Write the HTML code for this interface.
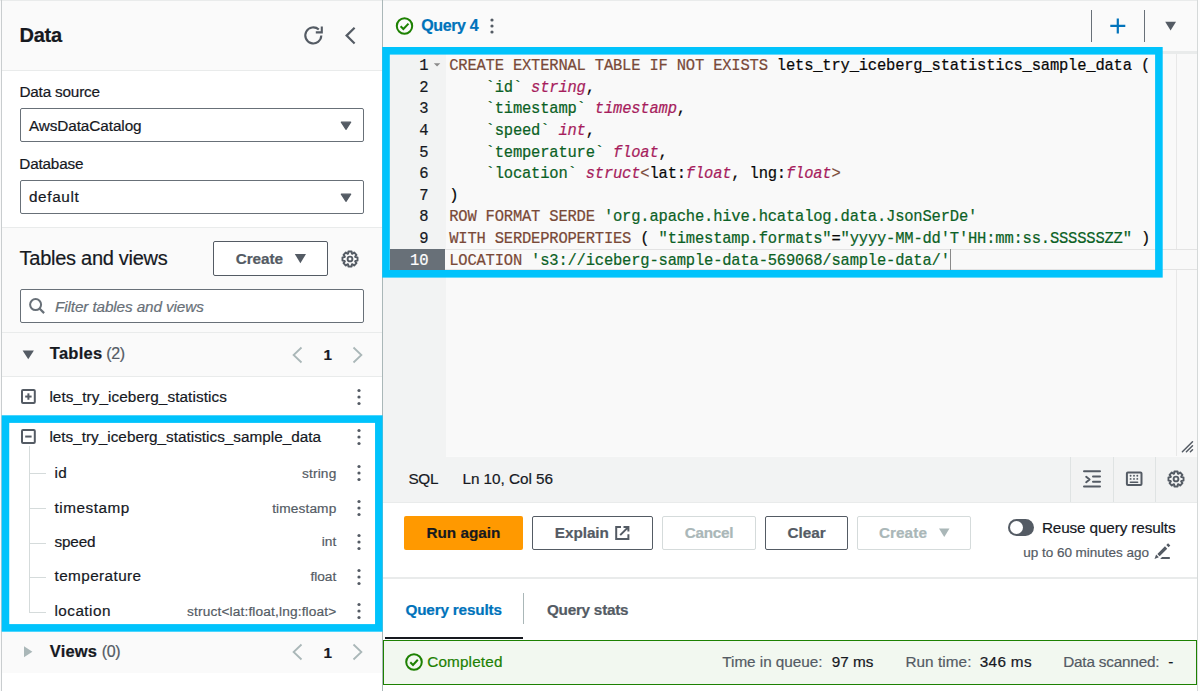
<!DOCTYPE html><html><head><meta charset="utf-8"><style>div{-webkit-text-stroke:0.2px}html,body{margin:0;padding:0;width:1200px;height:691px;overflow:hidden;position:relative;background:#fff}body{font-family:'Liberation Sans', sans-serif}</style></head><body>
<div style="position:absolute;left:0px;top:0px;width:1200px;height:691px;background:#fafafa"></div>
<div style="position:absolute;left:0px;top:0px;width:1200px;height:1px;background:#e9ebeb"></div>
<div style="position:absolute;left:1px;top:0px;width:1px;height:691px;background:#c9cdcf"></div>
<div style="position:absolute;left:2px;top:1px;width:380px;height:69px;background:#fafafa"></div>
<div style="position:absolute;left:2px;top:70px;width:380px;height:1px;background:#e9ebeb"></div>
<div style="position:absolute;left:2px;top:71px;width:380px;height:156px;background:#ffffff"></div>
<div style="position:absolute;left:2px;top:227px;width:380px;height:1px;background:#e9ebeb"></div>
<div style="position:absolute;left:2px;top:228px;width:380px;height:104px;background:#fafafa"></div>
<div style="position:absolute;left:2px;top:332px;width:380px;height:1px;background:#e9ebeb"></div>
<div style="position:absolute;left:2px;top:333px;width:380px;height:43px;background:#fafafa"></div>
<div style="position:absolute;left:2px;top:376px;width:380px;height:1px;background:#e9ebeb"></div>
<div style="position:absolute;left:2px;top:377px;width:380px;height:255px;background:#ffffff"></div>
<div style="position:absolute;left:2px;top:632px;width:380px;height:41px;background:#fafafa"></div>
<div style="position:absolute;left:2px;top:673px;width:380px;height:18px;background:#ffffff"></div>
<div style="position:absolute;left:382px;top:0px;width:1px;height:691px;background:#aab7b8"></div>
<svg style="position:absolute;left:300px;top:22px" width="28" height="28" viewBox="300 22 28 28">
<path d="M321.3 35.6 A8 8 0 1 1 318.8 29.6" fill="none" stroke="#545b64" stroke-width="2.1"/>
<path d="M315.8 32.4 H321.8 V26.6" fill="none" stroke="#545b64" stroke-width="2.1"/></svg>
<svg style="position:absolute;left:340px;top:22px" width="24" height="28" viewBox="340 22 24 28">
<path d="M354.6 27.8 L346.6 35.6 L354.6 43.5" fill="none" stroke="#545b64" stroke-width="2.2"/></svg>
<div style="position:absolute;left:19.5px;top:108px;width:344px;height:34px;box-sizing:border-box;border:1px solid #687078;border-radius:2px;background:#fff"></div>
<div style="position:absolute;left:19.5px;top:179.5px;width:344px;height:34px;box-sizing:border-box;border:1px solid #687078;border-radius:2px;background:#fff"></div>
<svg style="position:absolute;left:336px;top:120.4px" width="20" height="12" viewBox="0 0 20 12"><path d="M5.3 2.2 H14.7 L10 9.3 Z" fill="#545b64" stroke="#545b64" stroke-width="1.2" stroke-linejoin="round"/></svg>
<svg style="position:absolute;left:336px;top:191.8px" width="20" height="12" viewBox="0 0 20 12"><path d="M5.3 2.2 H14.7 L10 9.3 Z" fill="#545b64" stroke="#545b64" stroke-width="1.2" stroke-linejoin="round"/></svg>
<div style="position:absolute;left:213px;top:241px;width:114.5px;height:34.5px;box-sizing:border-box;border:1.5px solid #545b64;border-radius:2px;background:#fff"></div>
<svg style="position:absolute;left:290px;top:250px" width="20" height="16" viewBox="290 250 20 16"><path d="M294.8 254 H306 L300.4 263.3 Z" fill="#545b64"/></svg>
<svg style="position:absolute;left:338.3px;top:246.60000000000002px" width="24" height="24" viewBox="338.3 246.60000000000002 24 24"><path d="M348.44 253.21 L348.70 251.07 L351.90 251.07 L352.16 253.21 L352.80 253.48 L354.49 252.14 L356.76 254.41 L355.42 256.10 L355.69 256.74 L357.83 257.00 L357.83 260.20 L355.69 260.46 L355.42 261.10 L356.76 262.79 L354.49 265.06 L352.80 263.72 L352.16 263.99 L351.90 266.13 L348.70 266.13 L348.44 263.99 L347.80 263.72 L346.11 265.06 L343.84 262.79 L345.18 261.10 L344.91 260.46 L342.77 260.20 L342.77 257.00 L344.91 256.74 L345.18 256.10 L343.84 254.41 L346.11 252.14 L347.80 253.48 Z" fill="none" stroke="#545b64" stroke-width="1.9" stroke-linejoin="round"/><circle cx="350.3" cy="258.6" r="2.4" fill="none" stroke="#545b64" stroke-width="1.9"/></svg>
<div style="position:absolute;left:19.5px;top:289px;width:344.5px;height:34px;box-sizing:border-box;border:1px solid #687078;border-radius:2px;background:#fff"></div>
<svg style="position:absolute;left:26px;top:296px" width="22" height="22" viewBox="26 296 22 22"><circle cx="35.6" cy="304.6" r="5.5" fill="none" stroke="#687078" stroke-width="2"/><path d="M39.5 308.5 L44.1 313.1" stroke="#687078" stroke-width="2.2"/></svg>
<svg style="position:absolute;left:18px;top:345px" width="20" height="20" viewBox="18 345 20 20"><path d="M22.6 350.6 H33.9 L28.25 359.3 Z" fill="#545b64"/></svg>
<svg style="position:absolute;left:288px;top:342.6px" width="80" height="24" viewBox="288 342.6 80 24"><path d="M301.5 347.1 L293.6 354.6 L301.5 362.1" fill="none" stroke="#aab7b8" stroke-width="1.8"/><path d="M353.5 347.1 L361.4 354.6 L353.5 362.1" fill="none" stroke="#aab7b8" stroke-width="1.8"/></svg>
<svg style="position:absolute;left:18.6px;top:387.2px" width="20" height="20" viewBox="18.6 387.2 20 20"><rect x="21.6" y="390.2" width="12.8" height="13.1" rx="1" fill="none" stroke="#545b64" stroke-width="2"/><path d="M24.8 396.75 H31.200000000000003" stroke="#545b64" stroke-width="2"/><path d="M28.0 393.55 V399.95" stroke="#545b64" stroke-width="2"/></svg>
<svg style="position:absolute;left:353.9px;top:386.5px" width="10" height="20" viewBox="353.9 386.5 10 20"><circle cx="358.9" cy="390.0" r="1.6" fill="#545b64"/><circle cx="358.9" cy="396.5" r="1.6" fill="#545b64"/><circle cx="358.9" cy="403.0" r="1.6" fill="#545b64"/></svg>
<svg style="position:absolute;left:18.6px;top:427.2px" width="20" height="20" viewBox="18.6 427.2 20 20"><rect x="21.6" y="430.2" width="12.8" height="13.1" rx="1" fill="none" stroke="#545b64" stroke-width="2"/><path d="M24.8 436.75 H31.200000000000003" stroke="#545b64" stroke-width="2"/></svg>
<svg style="position:absolute;left:353.9px;top:427px" width="10" height="20" viewBox="353.9 427 10 20"><circle cx="358.9" cy="430.5" r="1.6" fill="#545b64"/><circle cx="358.9" cy="437" r="1.6" fill="#545b64"/><circle cx="358.9" cy="443.5" r="1.6" fill="#545b64"/></svg>
<div style="position:absolute;left:28.6px;top:446px;width:1px;height:166.5px;background:#d5dbdb"></div>
<div style="position:absolute;left:29px;top:473.0px;width:17px;height:1px;background:#d5dbdb"></div>
<svg style="position:absolute;left:353.9px;top:462.5px" width="10" height="20" viewBox="353.9 462.5 10 20"><circle cx="358.9" cy="466.0" r="1.6" fill="#545b64"/><circle cx="358.9" cy="472.5" r="1.6" fill="#545b64"/><circle cx="358.9" cy="479.0" r="1.6" fill="#545b64"/></svg>
<div style="position:absolute;left:29px;top:508.0px;width:17px;height:1px;background:#d5dbdb"></div>
<svg style="position:absolute;left:353.9px;top:497.5px" width="10" height="20" viewBox="353.9 497.5 10 20"><circle cx="358.9" cy="501.0" r="1.6" fill="#545b64"/><circle cx="358.9" cy="507.5" r="1.6" fill="#545b64"/><circle cx="358.9" cy="514.0" r="1.6" fill="#545b64"/></svg>
<div style="position:absolute;left:29px;top:542.5px;width:17px;height:1px;background:#d5dbdb"></div>
<svg style="position:absolute;left:353.9px;top:532px" width="10" height="20" viewBox="353.9 532 10 20"><circle cx="358.9" cy="535.5" r="1.6" fill="#545b64"/><circle cx="358.9" cy="542" r="1.6" fill="#545b64"/><circle cx="358.9" cy="548.5" r="1.6" fill="#545b64"/></svg>
<div style="position:absolute;left:29px;top:577.0px;width:17px;height:1px;background:#d5dbdb"></div>
<svg style="position:absolute;left:353.9px;top:566.5px" width="10" height="20" viewBox="353.9 566.5 10 20"><circle cx="358.9" cy="570.0" r="1.6" fill="#545b64"/><circle cx="358.9" cy="576.5" r="1.6" fill="#545b64"/><circle cx="358.9" cy="583.0" r="1.6" fill="#545b64"/></svg>
<div style="position:absolute;left:29px;top:611.5px;width:17px;height:1px;background:#d5dbdb"></div>
<svg style="position:absolute;left:353.9px;top:601px" width="10" height="20" viewBox="353.9 601 10 20"><circle cx="358.9" cy="604.5" r="1.6" fill="#545b64"/><circle cx="358.9" cy="611" r="1.6" fill="#545b64"/><circle cx="358.9" cy="617.5" r="1.6" fill="#545b64"/></svg>
<svg style="position:absolute;left:20px;top:642px" width="16" height="20" viewBox="20 642 16 20"><path d="M24 646.3 V657.2 L32.4 651.75 Z" fill="#aab7b8"/></svg>
<svg style="position:absolute;left:288px;top:640px" width="80" height="24" viewBox="288 640 80 24"><path d="M301.5 644.5 L293.6 652 L301.5 659.5" fill="none" stroke="#aab7b8" stroke-width="1.8"/><path d="M353.5 644.5 L361.4 652 L353.5 659.5" fill="none" stroke="#aab7b8" stroke-width="1.8"/></svg>
<svg style="position:absolute;left:0;top:410px" width="390" height="230" viewBox="0 410 390 230"><rect x="5.45" y="419.1" width="373.4" height="208.8" fill="none" stroke="#00c3fc" stroke-width="7.6"/></svg>
<div style="position:absolute;left:383px;top:1px;width:814px;height:50px;background:#fafafa"></div>
<div style="position:absolute;left:383px;top:51px;width:814px;height:3px;background:#e9ebeb"></div>
<div style="position:absolute;left:1197px;top:0px;width:1px;height:691px;background:#d5d9d9"></div>
<div style="position:absolute;left:1198px;top:0px;width:2px;height:691px;background:#fdfdfd"></div>
<svg style="position:absolute;left:392px;top:14px" width="24" height="24" viewBox="392 14 24 24"><circle cx="404.5" cy="26" r="7.7" fill="none" stroke="#1d8102" stroke-width="2"/><path d="M400.6 26.2 L403.4 29 L408.5 23.6" fill="none" stroke="#1d8102" stroke-width="2"/></svg>
<svg style="position:absolute;left:487.3px;top:15.600000000000001px" width="10" height="20" viewBox="487.3 15.600000000000001 10 20"><circle cx="492.3" cy="19.6" r="1.6" fill="#545b64"/><circle cx="492.3" cy="25.6" r="1.6" fill="#545b64"/><circle cx="492.3" cy="31.6" r="1.6" fill="#545b64"/></svg>
<div style="position:absolute;left:1091px;top:10px;width:1.2px;height:32px;background:#687078"></div>
<div style="position:absolute;left:1143.6px;top:10px;width:1.2px;height:32px;background:#687078"></div>
<svg style="position:absolute;left:1106px;top:14px" width="24" height="24" viewBox="1106 14 24 24"><path d="M1110.3 25.9 H1125.3 M1117.8 18.4 V33.4" stroke="#0073bb" stroke-width="2.2"/></svg>
<svg style="position:absolute;left:1160px;top:16px" width="20" height="20" viewBox="1160 16 20 20"><path d="M1165.2 21.7 H1176 L1170.6 30.4 Z" fill="#545b64"/></svg>
<div style="position:absolute;left:383px;top:54px;width:814px;height:402.3px;background:#f9f9f9"></div>
<div style="position:absolute;left:383px;top:54px;width:62.5px;height:402.5px;background:#f2f3f3"></div>
<div style="position:absolute;left:1176px;top:54px;width:1px;height:402.3px;background:#e8e8e8"></div>
<div style="position:absolute;left:445.2px;top:249px;width:752px;height:21px;box-sizing:border-box;border-top:1px solid #e3e3e3;border-bottom:1px solid #e3e3e3;background:#f9f9f9"></div>
<div style="position:absolute;left:390px;top:249px;width:55.2px;height:21px;background:#687078"></div>
<svg style="position:absolute;left:432px;top:58px" width="12" height="12" viewBox="432 58 12 12"><path d="M433.8 63.2 H440.3 L437.05 66.4 Z" fill="#8b8b8b"/></svg>
<svg style="position:absolute;left:1180px;top:438px" width="16" height="16" viewBox="1180 438 16 16"><path d="M1182.4 451.8 L1192.5 441.7 M1186.4 451.8 L1192.5 445.7 M1190.4 451.8 L1192.5 449.7" stroke="#545b64" stroke-width="1.5" stroke-linecap="round"/></svg>
<div style="position:absolute;left:449.2px;top:56.1px;height:21.6px;line-height:21.6px;font-family:'Liberation Mono', monospace;font-size:15.5px;letter-spacing:-0.200px;white-space:pre;transform:scaleY(1.1);transform-origin:0 14.93px"><span style="color:#794938;">CREATE EXTERNAL TABLE IF NOT EXISTS</span><span style="color:#080808;"> lets_try_iceberg_statistics_sample_data (</span></div>
<div style="position:absolute;left:390px;width:38.3px;text-align:right;top:56.1px;height:21.6px;line-height:21.6px;font-family:'Liberation Mono', monospace;font-size:15.5px;letter-spacing:-0.200px;color:#16191f;white-space:pre;transform:scaleY(1.1);transform-origin:0 14.93px">1</div>
<div style="position:absolute;left:449.2px;top:77.7px;height:21.6px;line-height:21.6px;font-family:'Liberation Mono', monospace;font-size:15.5px;letter-spacing:-0.200px;white-space:pre;transform:scaleY(1.1);transform-origin:0 14.93px"><span style="color:#080808;">    </span><span style="color:#0b6125;">`id`</span><span style="color:#080808;"> </span><span style="color:#a71d5d;font-style:italic;">string</span><span style="color:#080808;">,</span></div>
<div style="position:absolute;left:390px;width:38.3px;text-align:right;top:77.7px;height:21.6px;line-height:21.6px;font-family:'Liberation Mono', monospace;font-size:15.5px;letter-spacing:-0.200px;color:#16191f;white-space:pre;transform:scaleY(1.1);transform-origin:0 14.93px">2</div>
<div style="position:absolute;left:449.2px;top:99.30000000000001px;height:21.6px;line-height:21.6px;font-family:'Liberation Mono', monospace;font-size:15.5px;letter-spacing:-0.200px;white-space:pre;transform:scaleY(1.1);transform-origin:0 14.93px"><span style="color:#080808;">    </span><span style="color:#0b6125;">`timestamp`</span><span style="color:#080808;"> </span><span style="color:#a71d5d;font-style:italic;">timestamp</span><span style="color:#080808;">,</span></div>
<div style="position:absolute;left:390px;width:38.3px;text-align:right;top:99.30000000000001px;height:21.6px;line-height:21.6px;font-family:'Liberation Mono', monospace;font-size:15.5px;letter-spacing:-0.200px;color:#16191f;white-space:pre;transform:scaleY(1.1);transform-origin:0 14.93px">3</div>
<div style="position:absolute;left:449.2px;top:120.9px;height:21.6px;line-height:21.6px;font-family:'Liberation Mono', monospace;font-size:15.5px;letter-spacing:-0.200px;white-space:pre;transform:scaleY(1.1);transform-origin:0 14.93px"><span style="color:#080808;">    </span><span style="color:#0b6125;">`speed`</span><span style="color:#080808;"> </span><span style="color:#a71d5d;font-style:italic;">int</span><span style="color:#080808;">,</span></div>
<div style="position:absolute;left:390px;width:38.3px;text-align:right;top:120.9px;height:21.6px;line-height:21.6px;font-family:'Liberation Mono', monospace;font-size:15.5px;letter-spacing:-0.200px;color:#16191f;white-space:pre;transform:scaleY(1.1);transform-origin:0 14.93px">4</div>
<div style="position:absolute;left:449.2px;top:142.5px;height:21.6px;line-height:21.6px;font-family:'Liberation Mono', monospace;font-size:15.5px;letter-spacing:-0.200px;white-space:pre;transform:scaleY(1.1);transform-origin:0 14.93px"><span style="color:#080808;">    </span><span style="color:#0b6125;">`temperature`</span><span style="color:#080808;"> </span><span style="color:#a71d5d;font-style:italic;">float</span><span style="color:#080808;">,</span></div>
<div style="position:absolute;left:390px;width:38.3px;text-align:right;top:142.5px;height:21.6px;line-height:21.6px;font-family:'Liberation Mono', monospace;font-size:15.5px;letter-spacing:-0.200px;color:#16191f;white-space:pre;transform:scaleY(1.1);transform-origin:0 14.93px">5</div>
<div style="position:absolute;left:449.2px;top:164.1px;height:21.6px;line-height:21.6px;font-family:'Liberation Mono', monospace;font-size:15.5px;letter-spacing:-0.200px;white-space:pre;transform:scaleY(1.1);transform-origin:0 14.93px"><span style="color:#080808;">    </span><span style="color:#0b6125;">`location`</span><span style="color:#080808;"> </span><span style="color:#a71d5d;font-style:italic;">struct</span><span style="color:#794938;">&lt;</span><span style="color:#080808;">lat:</span><span style="color:#a71d5d;font-style:italic;">float</span><span style="color:#080808;">, lng:</span><span style="color:#a71d5d;font-style:italic;">float</span><span style="color:#794938;">&gt;</span></div>
<div style="position:absolute;left:390px;width:38.3px;text-align:right;top:164.1px;height:21.6px;line-height:21.6px;font-family:'Liberation Mono', monospace;font-size:15.5px;letter-spacing:-0.200px;color:#16191f;white-space:pre;transform:scaleY(1.1);transform-origin:0 14.93px">6</div>
<div style="position:absolute;left:449.2px;top:185.70000000000002px;height:21.6px;line-height:21.6px;font-family:'Liberation Mono', monospace;font-size:15.5px;letter-spacing:-0.200px;white-space:pre;transform:scaleY(1.1);transform-origin:0 14.93px"><span style="color:#080808;">)</span></div>
<div style="position:absolute;left:390px;width:38.3px;text-align:right;top:185.70000000000002px;height:21.6px;line-height:21.6px;font-family:'Liberation Mono', monospace;font-size:15.5px;letter-spacing:-0.200px;color:#16191f;white-space:pre;transform:scaleY(1.1);transform-origin:0 14.93px">7</div>
<div style="position:absolute;left:449.2px;top:207.3px;height:21.6px;line-height:21.6px;font-family:'Liberation Mono', monospace;font-size:15.5px;letter-spacing:-0.200px;white-space:pre;transform:scaleY(1.1);transform-origin:0 14.93px"><span style="color:#794938;">ROW FORMAT SERDE</span><span style="color:#080808;"> </span><span style="color:#0b6125;">'org.apache.hive.hcatalog.data.JsonSerDe'</span></div>
<div style="position:absolute;left:390px;width:38.3px;text-align:right;top:207.3px;height:21.6px;line-height:21.6px;font-family:'Liberation Mono', monospace;font-size:15.5px;letter-spacing:-0.200px;color:#16191f;white-space:pre;transform:scaleY(1.1);transform-origin:0 14.93px">8</div>
<div style="position:absolute;left:449.2px;top:228.9px;height:21.6px;line-height:21.6px;font-family:'Liberation Mono', monospace;font-size:15.5px;letter-spacing:-0.200px;white-space:pre;transform:scaleY(1.1);transform-origin:0 14.93px"><span style="color:#794938;">WITH SERDEPROPERTIES</span><span style="color:#080808;"> ( </span><span style="color:#0b6125;">"timestamp.formats"</span><span style="color:#080808;">=</span><span style="color:#0b6125;">"yyyy-MM-dd'T'HH:mm:ss.SSSSSSZZ"</span><span style="color:#080808;"> )</span></div>
<div style="position:absolute;left:390px;width:38.3px;text-align:right;top:228.9px;height:21.6px;line-height:21.6px;font-family:'Liberation Mono', monospace;font-size:15.5px;letter-spacing:-0.200px;color:#16191f;white-space:pre;transform:scaleY(1.1);transform-origin:0 14.93px">9</div>
<div style="position:absolute;left:449.2px;top:250.5px;height:21.6px;line-height:21.6px;font-family:'Liberation Mono', monospace;font-size:15.5px;letter-spacing:-0.200px;white-space:pre;transform:scaleY(1.1);transform-origin:0 14.93px"><span style="color:#794938;">LOCATION</span><span style="color:#080808;"> </span><span style="color:#0b6125;">'s3://iceberg-sample-data-569068/sample-data/'</span></div>
<div style="position:absolute;left:390px;width:38.3px;text-align:right;top:250.5px;height:21.6px;line-height:21.6px;font-family:'Liberation Mono', monospace;font-size:15.5px;letter-spacing:-0.200px;color:#ffffff;white-space:pre;transform:scaleY(1.1);transform-origin:0 14.93px">10</div>
<div style="position:absolute;left:949.7px;top:249.2px;width:1.2px;height:20.6px;background:#8a8a8a"></div>
<svg style="position:absolute;left:375px;top:40px" width="800" height="245" viewBox="375 40 800 245"><rect x="386" y="50.8" width="772.9" height="223" fill="none" stroke="#00c3fc" stroke-width="7.6"/></svg>
<div style="position:absolute;left:383px;top:456.5px;width:814px;height:1px;background:#d5dbdb"></div>
<div style="position:absolute;left:383px;top:457.3px;width:814px;height:45px;background:#f2f3f3"></div>
<div style="position:absolute;left:383px;top:502px;width:814px;height:1px;background:#e9ebeb"></div>
<div style="position:absolute;left:1070.4px;top:457.3px;width:1px;height:44.7px;background:#dfe3e3"></div>
<div style="position:absolute;left:1112.8px;top:457.3px;width:1px;height:44.7px;background:#dfe3e3"></div>
<div style="position:absolute;left:1155.3px;top:457.3px;width:1px;height:44.7px;background:#dfe3e3"></div>
<svg style="position:absolute;left:1080px;top:467px" width="24" height="24" viewBox="1080 467 24 24"><path d="M1084 471.3 H1100 M1093 476.4 H1100 M1093 481.8 H1100 M1084 486.6 H1100" stroke="#545b64" stroke-width="2" stroke-linecap="round"/><path d="M1086.2 476.8 L1089.6 479.5 L1086.2 482.2" fill="none" stroke="#545b64" stroke-width="2" stroke-linecap="round" stroke-linejoin="round"/></svg>
<svg style="position:absolute;left:1122px;top:468px" width="24" height="22" viewBox="1122 468 24 22"><rect x="1126.9" y="472.6" width="14.6" height="12.3" rx="1" fill="none" stroke="#545b64" stroke-width="2"/><circle cx="1130.6" cy="475.8" r="0.95" fill="#545b64"/><circle cx="1130.6" cy="478.9" r="0.95" fill="#545b64"/><circle cx="1134.0" cy="475.8" r="0.95" fill="#545b64"/><circle cx="1134.0" cy="478.9" r="0.95" fill="#545b64"/><circle cx="1137.3" cy="475.8" r="0.95" fill="#545b64"/><circle cx="1137.3" cy="478.9" r="0.95" fill="#545b64"/><path d="M1130.4 482.2 H1137.6" stroke="#545b64" stroke-width="1.6" stroke-linecap="round"/></svg>
<svg style="position:absolute;left:1164.3px;top:467px" width="24" height="24" viewBox="1164.3 467 24 24"><path d="M1174.44 473.61 L1174.70 471.47 L1177.90 471.47 L1178.16 473.61 L1178.80 473.88 L1180.49 472.54 L1182.76 474.81 L1181.42 476.50 L1181.69 477.14 L1183.83 477.40 L1183.83 480.60 L1181.69 480.86 L1181.42 481.50 L1182.76 483.19 L1180.49 485.46 L1178.80 484.12 L1178.16 484.39 L1177.90 486.53 L1174.70 486.53 L1174.44 484.39 L1173.80 484.12 L1172.11 485.46 L1169.84 483.19 L1171.18 481.50 L1170.91 480.86 L1168.77 480.60 L1168.77 477.40 L1170.91 477.14 L1171.18 476.50 L1169.84 474.81 L1172.11 472.54 L1173.80 473.88 Z" fill="none" stroke="#545b64" stroke-width="1.9" stroke-linejoin="round"/><circle cx="1176.3" cy="479" r="2.4" fill="none" stroke="#545b64" stroke-width="1.9"/></svg>
<div style="position:absolute;left:383px;top:503px;width:814px;height:74px;background:#ffffff"></div>
<div style="position:absolute;left:404px;top:515.75px;width:119.2px;height:34.25px;background:#ff9900;border-radius:2px"></div>
<div style="position:absolute;left:532.2px;top:515.75px;width:121px;height:34.25px;box-sizing:border-box;border:1.5px solid #545b64;border-radius:2px;background:#fff"></div>
<svg style="position:absolute;left:612px;top:522px" width="20" height="20" viewBox="612 522 20 20"><path d="M621 526.9 H616.2 V539.1 H628.4 V534.2" fill="none" stroke="#545b64" stroke-width="2"/><path d="M623.5 526.9 H628.4 V531.6 M628.2 527.1 L620.2 535.1" fill="none" stroke="#545b64" stroke-width="2"/></svg>
<div style="position:absolute;left:662.2px;top:516px;width:93.5px;height:34px;box-sizing:border-box;border:1px solid #d5dbdb;border-radius:2px;background:#fff"></div>
<div style="position:absolute;left:764.8px;top:515.75px;width:83px;height:34.25px;box-sizing:border-box;border:1.5px solid #545b64;border-radius:2px;background:#fff"></div>
<div style="position:absolute;left:856.9px;top:516px;width:114.1px;height:34px;box-sizing:border-box;border:1px solid #d5dbdb;border-radius:2px;background:#fff"></div>
<svg style="position:absolute;left:936px;top:524px" width="16" height="16" viewBox="936 524 16 16"><path d="M939 528.5 H949.5 L944.25 537 Z" fill="#aab7b8"/></svg>
<div style="position:absolute;left:1007.5px;top:519.4px;width:26.25px;height:16.8px;background:#545b64;border-radius:9px"></div>
<div style="position:absolute;left:1009.6px;top:521.1px;width:13.2px;height:13.2px;background:#ffffff;border-radius:50%"></div>
<svg style="position:absolute;left:1150px;top:540px" width="24" height="22" viewBox="1150 540 24 22"><path d="M1154.5 558.9 L1156.1 554.5 L1158.9 557.3 Z" fill="#545b64"/><path d="M1158.5 555.1 L1166.1 547.5 M1167.4 546.2 L1169.2 544.4" stroke="#545b64" stroke-width="3.2"/><path d="M1160.2 558.9 L1162 556.9 H1169.8 V558.9 Z" fill="#545b64"/></svg>
<div style="position:absolute;left:383px;top:577px;width:814px;height:1.5px;background:#e9ebeb"></div>
<div style="position:absolute;left:383px;top:578.5px;width:814px;height:62px;background:#ffffff"></div>
<div style="position:absolute;left:522.5px;top:592.8px;width:1px;height:31.5px;background:#aab7b8"></div>
<div style="position:absolute;left:385px;top:636.5px;width:137.8px;height:2.3px;background:#16191f"></div>
<div style="position:absolute;left:382.8px;top:640.2px;width:814.2px;height:44.8px;box-sizing:border-box;border:1.5px solid #1d8102;background:#f2f8f0"></div>
<div style="position:absolute;left:383px;top:685px;width:814px;height:6px;background:#ffffff"></div>
<svg style="position:absolute;left:402px;top:650px" width="24" height="24" viewBox="402 650 24 24"><circle cx="414" cy="662" r="7.8" fill="none" stroke="#1d8102" stroke-width="2"/><path d="M410.3 662.3 L413 665 L417.8 659.8" fill="none" stroke="#1d8102" stroke-width="2"/></svg>
<div style="position:absolute;top:24.77px;height:20px;line-height:20px;white-space:pre;font-family:'Liberation Sans', sans-serif;font-size:20px;font-weight:700;color:#16191f;letter-spacing:-0.253px;left:19.50px;">Data</div>
<div style="position:absolute;top:84.25px;height:15.3px;line-height:15.3px;white-space:pre;font-family:'Liberation Sans', sans-serif;font-size:15.3px;font-weight:400;color:#16191f;letter-spacing:-0.176px;left:19.39px;">Data source</div>
<div style="position:absolute;top:118.05px;height:15.3px;line-height:15.3px;white-space:pre;font-family:'Liberation Sans', sans-serif;font-size:15.3px;font-weight:400;color:#16191f;letter-spacing:-0.073px;left:28.89px;">AwsDataCatalog</div>
<div style="position:absolute;top:155.80px;height:15.3px;line-height:15.3px;white-space:pre;font-family:'Liberation Sans', sans-serif;font-size:15.3px;font-weight:400;color:#16191f;letter-spacing:-0.180px;left:19.29px;">Database</div>
<div style="position:absolute;top:189.05px;height:15.3px;line-height:15.3px;white-space:pre;font-family:'Liberation Sans', sans-serif;font-size:15.3px;font-weight:400;color:#16191f;letter-spacing:0.664px;left:28.89px;">default</div>
<div style="position:absolute;top:247.67px;height:20px;line-height:20px;white-space:pre;font-family:'Liberation Sans', sans-serif;font-size:20px;font-weight:400;color:#16191f;letter-spacing:-0.274px;left:19.60px;">Tables and views</div>
<div style="position:absolute;top:250.75px;height:15.3px;line-height:15.3px;white-space:pre;font-family:'Liberation Sans', sans-serif;font-size:15.3px;font-weight:700;color:#545b64;letter-spacing:-0.060px;left:235.69px;">Create</div>
<div style="position:absolute;top:299.05px;height:15.3px;line-height:15.3px;white-space:pre;font-family:'Liberation Sans', sans-serif;font-size:15.3px;font-weight:400;color:#687078;letter-spacing:-0.115px;font-style:italic;left:54.99px;">Filter tables and views</div>
<div style="position:absolute;top:345.33px;height:16.5px;line-height:16.5px;white-space:pre;font-family:'Liberation Sans', sans-serif;font-size:16.5px;font-weight:700;color:#16191f;letter-spacing:0.295px;left:49.74px;">Tables</div>
<div style="position:absolute;top:345.76px;height:16px;line-height:16px;white-space:pre;font-family:'Liberation Sans', sans-serif;font-size:16px;font-weight:400;color:#545b64;letter-spacing:-0.300px;left:106.16px;">(2)</div>
<div style="position:absolute;top:346.85px;height:15.3px;line-height:15.3px;white-space:pre;font-family:'Liberation Sans', sans-serif;font-size:15.3px;font-weight:700;color:#16191f;letter-spacing:0.000px;left:323.59px;">1</div>
<div style="position:absolute;top:388.75px;height:15.3px;line-height:15.3px;white-space:pre;font-family:'Liberation Sans', sans-serif;font-size:15.3px;font-weight:400;color:#16191f;letter-spacing:0.092px;left:49.39px;">lets_try_iceberg_statistics</div>
<div style="position:absolute;top:429.35px;height:15.3px;line-height:15.3px;white-space:pre;font-family:'Liberation Sans', sans-serif;font-size:15.3px;font-weight:400;color:#16191f;letter-spacing:0.012px;left:49.39px;">lets_try_iceberg_statistics_sample_data</div>
<div style="position:absolute;top:464.75px;height:15.3px;line-height:15.3px;white-space:pre;font-family:'Liberation Sans', sans-serif;font-size:15.3px;font-weight:400;color:#16191f;letter-spacing:0.300px;left:54.49px;">id</div>
<div style="position:absolute;top:467.10px;height:13.7px;line-height:13.7px;white-space:pre;font-family:'Liberation Sans', sans-serif;font-size:13.7px;font-weight:400;color:#545b64;letter-spacing:0.182px;right:863.57px;">string</div>
<div style="position:absolute;top:499.85px;height:15.3px;line-height:15.3px;white-space:pre;font-family:'Liberation Sans', sans-serif;font-size:15.3px;font-weight:400;color:#16191f;letter-spacing:0.520px;left:54.49px;">timestamp</div>
<div style="position:absolute;top:502.20px;height:13.7px;line-height:13.7px;white-space:pre;font-family:'Liberation Sans', sans-serif;font-size:13.7px;font-weight:400;color:#545b64;letter-spacing:0.119px;right:863.63px;">timestamp</div>
<div style="position:absolute;top:533.55px;height:15.3px;line-height:15.3px;white-space:pre;font-family:'Liberation Sans', sans-serif;font-size:15.3px;font-weight:400;color:#16191f;letter-spacing:-0.141px;left:54.49px;">speed</div>
<div style="position:absolute;top:534.90px;height:13.7px;line-height:13.7px;white-space:pre;font-family:'Liberation Sans', sans-serif;font-size:13.7px;font-weight:400;color:#545b64;letter-spacing:0.000px;right:863.75px;">int</div>
<div style="position:absolute;top:568.05px;height:15.3px;line-height:15.3px;white-space:pre;font-family:'Liberation Sans', sans-serif;font-size:15.3px;font-weight:400;color:#16191f;letter-spacing:0.414px;left:54.49px;">temperature</div>
<div style="position:absolute;top:570.40px;height:13.7px;line-height:13.7px;white-space:pre;font-family:'Liberation Sans', sans-serif;font-size:13.7px;font-weight:400;color:#545b64;letter-spacing:0.000px;right:863.75px;">float</div>
<div style="position:absolute;top:603.05px;height:15.3px;line-height:15.3px;white-space:pre;font-family:'Liberation Sans', sans-serif;font-size:15.3px;font-weight:400;color:#16191f;letter-spacing:0.456px;left:54.49px;">location</div>
<div style="position:absolute;top:605.40px;height:13.7px;line-height:13.7px;white-space:pre;font-family:'Liberation Sans', sans-serif;font-size:13.7px;font-weight:400;color:#545b64;letter-spacing:0.149px;right:863.60px;">struct&lt;lat:float,lng:float&gt;</div>
<div style="position:absolute;top:643.23px;height:16.5px;line-height:16.5px;white-space:pre;font-family:'Liberation Sans', sans-serif;font-size:16.5px;font-weight:700;color:#16191f;letter-spacing:0.209px;left:49.74px;">Views</div>
<div style="position:absolute;top:643.66px;height:16px;line-height:16px;white-space:pre;font-family:'Liberation Sans', sans-serif;font-size:16px;font-weight:400;color:#545b64;letter-spacing:-0.300px;left:101.66px;">(0)</div>
<div style="position:absolute;top:644.65px;height:15.3px;line-height:15.3px;white-space:pre;font-family:'Liberation Sans', sans-serif;font-size:15.3px;font-weight:700;color:#16191f;letter-spacing:0.000px;left:323.59px;">1</div>
<div style="position:absolute;top:17.96px;height:16px;line-height:16px;white-space:pre;font-family:'Liberation Sans', sans-serif;font-size:16px;font-weight:700;color:#0073bb;letter-spacing:-0.369px;left:421.26px;">Query 4</div>
<div style="position:absolute;top:471.25px;height:15.3px;line-height:15.3px;white-space:pre;font-family:'Liberation Sans', sans-serif;font-size:15.3px;font-weight:400;color:#16191f;letter-spacing:-0.300px;left:408.39px;">SQL</div>
<div style="position:absolute;top:471.25px;height:15.3px;line-height:15.3px;white-space:pre;font-family:'Liberation Sans', sans-serif;font-size:15.3px;font-weight:400;color:#16191f;letter-spacing:-0.048px;left:462.49px;">Ln 10, Col 56</div>
<div style="position:absolute;top:525.35px;height:15.3px;line-height:15.3px;white-space:pre;font-family:'Liberation Sans', sans-serif;font-size:15.3px;font-weight:700;color:#16191f;letter-spacing:0.011px;left:426.39px;">Run again</div>
<div style="position:absolute;top:525.35px;height:15.3px;line-height:15.3px;white-space:pre;font-family:'Liberation Sans', sans-serif;font-size:15.3px;font-weight:700;color:#545b64;letter-spacing:-0.047px;left:554.79px;">Explain</div>
<div style="position:absolute;top:525.35px;height:15.3px;line-height:15.3px;white-space:pre;font-family:'Liberation Sans', sans-serif;font-size:15.3px;font-weight:700;color:#aab7b8;letter-spacing:-0.270px;left:684.79px;">Cancel</div>
<div style="position:absolute;top:525.35px;height:15.3px;line-height:15.3px;white-space:pre;font-family:'Liberation Sans', sans-serif;font-size:15.3px;font-weight:700;color:#545b64;letter-spacing:-0.010px;left:787.39px;">Clear</div>
<div style="position:absolute;top:525.35px;height:15.3px;line-height:15.3px;white-space:pre;font-family:'Liberation Sans', sans-serif;font-size:15.3px;font-weight:700;color:#aab7b8;letter-spacing:0.080px;left:878.89px;">Create</div>
<div style="position:absolute;top:520.05px;height:15.3px;line-height:15.3px;white-space:pre;font-family:'Liberation Sans', sans-serif;font-size:15.3px;font-weight:400;color:#16191f;letter-spacing:-0.129px;left:1041.89px;">Reuse query results</div>
<div style="position:absolute;top:546.17px;height:13.5px;line-height:13.5px;white-space:pre;font-family:'Liberation Sans', sans-serif;font-size:13.5px;font-weight:400;color:#545b64;letter-spacing:-0.022px;left:1023.26px;">up to 60 minutes ago</div>
<div style="position:absolute;top:601.55px;height:15.3px;line-height:15.3px;white-space:pre;font-family:'Liberation Sans', sans-serif;font-size:15.3px;font-weight:700;color:#0073bb;letter-spacing:-0.183px;left:405.49px;">Query results</div>
<div style="position:absolute;top:601.55px;height:15.3px;line-height:15.3px;white-space:pre;font-family:'Liberation Sans', sans-serif;font-size:15.3px;font-weight:700;color:#545b64;letter-spacing:-0.245px;left:546.89px;">Query stats</div>
<div style="position:absolute;top:653.85px;height:15.3px;line-height:15.3px;white-space:pre;font-family:'Liberation Sans', sans-serif;font-size:15.3px;font-weight:400;color:#1d8102;letter-spacing:0.155px;left:427.19px;">Completed</div>
<div style="position:absolute;top:654.05px;height:15.3px;line-height:15.3px;white-space:pre;font-family:'Liberation Sans', sans-serif;font-size:15.3px;font-weight:400;color:#545b64;letter-spacing:-0.031px;left:722.29px;">Time in queue:</div>
<div style="position:absolute;top:654.05px;height:15.3px;line-height:15.3px;white-space:pre;font-family:'Liberation Sans', sans-serif;font-size:15.3px;font-weight:400;color:#16191f;letter-spacing:0.042px;left:831.69px;">97 ms</div>
<div style="position:absolute;top:654.05px;height:15.3px;line-height:15.3px;white-space:pre;font-family:'Liberation Sans', sans-serif;font-size:15.3px;font-weight:400;color:#545b64;letter-spacing:0.069px;left:905.39px;">Run time:</div>
<div style="position:absolute;top:654.05px;height:15.3px;line-height:15.3px;white-space:pre;font-family:'Liberation Sans', sans-serif;font-size:15.3px;font-weight:400;color:#16191f;letter-spacing:0.330px;left:979.79px;">346 ms</div>
<div style="position:absolute;top:654.05px;height:15.3px;line-height:15.3px;white-space:pre;font-family:'Liberation Sans', sans-serif;font-size:15.3px;font-weight:400;color:#545b64;letter-spacing:-0.182px;left:1063.14px;">Data scanned:</div>
<div style="position:absolute;top:654.05px;height:15.3px;line-height:15.3px;white-space:pre;font-family:'Liberation Sans', sans-serif;font-size:15.3px;font-weight:400;color:#16191f;letter-spacing:0.000px;left:1168.14px;">-</div>
</body></html>
